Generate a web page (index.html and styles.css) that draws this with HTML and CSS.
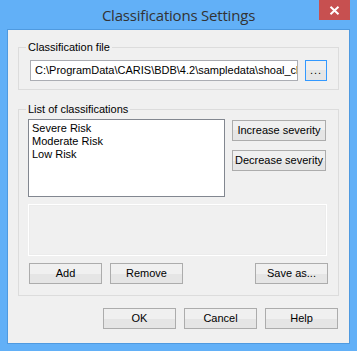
FILE: index.html
```html
<!DOCTYPE html>
<html>
<head>
<meta charset="utf-8">
<title>Classifications Settings</title>
<link rel="stylesheet" href="styles.css">
</head>
<body>
<div class="window">
  <div class="titlebar">
    <span class="spacer"></span>
    <span class="title">Classifications Settings</span>
    <button class="close" aria-label="Close">
      <svg width="11" height="9" viewBox="0 0 11 9"><path d="M1.5 0.8 L9.5 8.2 M9.5 0.8 L1.5 8.2" stroke="#fff" stroke-width="2" fill="none"/></svg>
    </button>
  </div>
  <div class="client">
    <fieldset class="group group-file">
      <legend>Classification file</legend>
      <div class="file-row">
        <div class="field">C:\ProgramData\CARIS\BDB\4.2\sampledata\shoal_classifications.xml</div>
        <button class="btn btn-browse">...</button>
      </div>
    </fieldset>
    <fieldset class="group group-list">
      <legend>List of classifications</legend>
      <div class="list-body">
        <div class="list-row">
          <div class="listbox">
            <div class="item">Severe Risk</div>
            <div class="item">Moderate Risk</div>
            <div class="item">Low Risk</div>
          </div>
          <div class="side-buttons">
            <button class="btn btn-side">Increase severity</button>
            <button class="btn btn-side">Decrease severity</button>
          </div>
        </div>
        <div class="panel"></div>
        <div class="action-row">
          <button class="btn btn-std">Add</button>
          <button class="btn btn-std">Remove</button>
          <span class="grow"></span>
          <button class="btn btn-std">Save as...</button>
        </div>
      </div>
    </fieldset>
    <div class="dialog-buttons">
      <button class="btn btn-std">OK</button>
      <button class="btn btn-std">Cancel</button>
      <button class="btn btn-std">Help</button>
    </div>
  </div>
</div>
</body>
</html>
```

FILE: styles.css
```css
html, body {
  margin: 0;
  padding: 0;
}
body {
  width: 357px;
  height: 351px;
  background: #62b0f7;
  font-family: "Liberation Sans", Arial, sans-serif;
  font-size: 11px;
  color: #000;
  overflow: hidden;
}
.window {
  box-sizing: border-box;
  width: 357px;
  height: 351px;
  padding: 0 7px 7px 7px;
  display: flex;
  flex-direction: column;
}
.titlebar {
  height: 29px;
  display: grid;
  grid-template-columns: 1fr auto 1fr;
  align-items: start;
}
.title {
  font-family: "Open Sans", "Noto Sans", sans-serif;
  font-size: 15px;
  color: #333;
  line-height: 18px;
  margin-top: 6px;
  letter-spacing: -0.2px;
  white-space: nowrap;
}
.close {
  justify-self: end;
  width: 31px;
  height: 20px;
  padding: 0;
  border: none;
  background: #c75050;
  display: flex;
  align-items: center;
  justify-content: center;
}
.client {
  flex: 1;
  background: #f0f0f0;
  border: 1px solid #4f9ae0;
  display: flex;
  flex-direction: column;
  padding: 11px 10px 0 10px;
}
.group {
  margin: 0;
  padding: 0;
  border: 1px solid #dcdcdc;
  min-width: 0;
}
.group legend {
  margin-left: 7px;
  padding: 0 2px;
  line-height: 13px;
}
.file-row {
  display: flex;
  gap: 7px;
  padding: 6px 9px 8px 11px;
}
.field {
  box-sizing: border-box;
  width: 268px;
  height: 21px;
  background: #fff;
  border: 1px solid #abadb3;
  padding: 3px 4px;
  white-space: nowrap;
  overflow: hidden;
  line-height: 13px;
}
.btn {
  box-sizing: border-box;
  height: 21px;
  border: 1px solid #acacac;
  background: linear-gradient(#f0f0f0 0, #f0f0f0 50%, #e5e5e5 50%, #e5e5e5 100%);
  font-family: "Liberation Sans", Arial, sans-serif;
  font-size: 11px;
  color: #000;
  padding: 0;
  line-height: 13px;
  white-space: nowrap;
}
.btn-browse {
  width: 22px;
  border-color: #3399ff;
  letter-spacing: 1px;
}
.group-list {
  margin-top: 13px;
}
.list-body {
  padding: 3px 10px 11px 9px;
  display: flex;
  flex-direction: column;
  gap: 7px;
}
.list-row {
  display: flex;
  gap: 7px;
}
.listbox {
  box-sizing: border-box;
  width: 197px;
  height: 78px;
  background: #fff;
  border: 1px solid #828790;
  padding: 2px 2px;
}
.item {
  line-height: 13px;
  padding-left: 1px;
}
.side-buttons {
  display: flex;
  flex-direction: column;
  gap: 9px;
  padding-top: 1px;
}
.btn-side {
  width: 94px;
}
.panel {
  box-sizing: border-box;
  width: 299px;
  height: 52px;
  border: 1px solid #fff;
  box-shadow: inset 0 0 0 1px #ececec;
}
.action-row {
  display: flex;
  gap: 8px;
  padding-left: 1px;
}
.grow {
  flex: 1;
}
.btn-std {
  width: 73px;
}
.dialog-buttons {
  display: flex;
  justify-content: flex-end;
  gap: 8px;
  padding: 12px 1px 0 0;
}
```
